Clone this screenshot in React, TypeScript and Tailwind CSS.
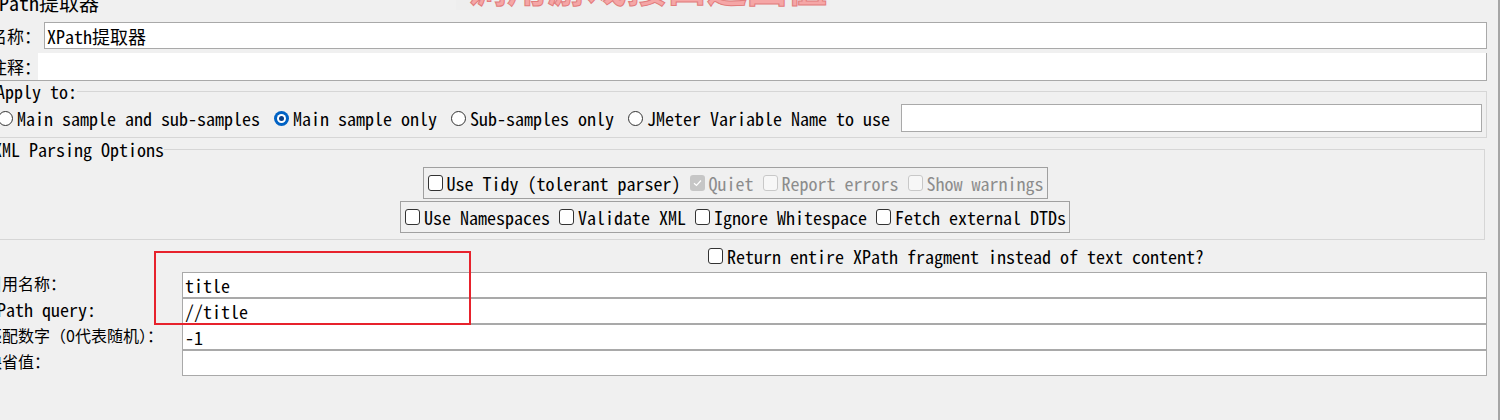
import React from "react";

type CbState = "off" | "dis" | "dischk";

function Check({ state = "off" }: { state?: CbState }) {
  if (state === "dischk") {
    return (
      <span className="w-[15px] h-[16px] shrink-0 rounded-[3px] bg-[#c6c6c6] flex items-center justify-center">
        <svg width="9" height="8" viewBox="0 0 9 8">
          <path d="M1 4.2 L3.5 6.5 L8 1.5" stroke="#ffffff" strokeWidth="1.2" fill="none" />
        </svg>
      </span>
    );
  }
  if (state === "dis") {
    return <span className="w-[15px] h-[16px] shrink-0 rounded-[3px] border border-[#c8c8c8] bg-[#f7f7f7]" />;
  }
  return <span className="w-[15px] h-[16px] shrink-0 rounded-[3px] border border-[#333333] bg-white" />;
}

function Radio({ on = false }: { on?: boolean }) {
  if (on) {
    return (
      <span className="w-[15px] h-[15px] shrink-0 rounded-full bg-[#0062c4] flex items-center justify-center">
        <span className="w-[9px] h-[9px] rounded-full bg-white flex items-center justify-center">
          <span className="w-[5px] h-[5px] rounded-full bg-[#0a3f86]" />
        </span>
      </span>
    );
  }
  return <span className="w-[15px] h-[15px] shrink-0 rounded-full border border-[#333333] bg-white" />;
}

function CbItem({ label, state = "off" }: { label: string; state?: CbState }) {
  return (
    <div className="flex items-center gap-[4px]">
      <Check state={state} />
      <span className={state === "off" ? "whitespace-pre leading-none" : "whitespace-pre leading-none text-[#8c8c8c]"}>{label}</span>
    </div>
  );
}

function RadioItem({ label, on = false }: { label: string; on?: boolean }) {
  return (
    <div className="flex items-center gap-[4px]">
      <Radio on={on} />
      <span className="whitespace-pre leading-none">{label}</span>
    </div>
  );
}

const fields: { label: string; value: string; mono: boolean }[] = [
  { label: "引用名称：", value: "title", mono: false },
  { label: "XPath query:", value: "//title", mono: true },
  { label: "匹配数字（0代表随机）：", value: "-1", mono: false },
  { label: "缺省值：", value: "", mono: false },
];

export default function App() {
  return (
    <div className="relative w-[1500px] h-[420px] overflow-hidden bg-[#f0f0f0] text-black border-r-2 border-[#a6a6a6] font-['Noto_Sans_Mono_CJK_SC','Liberation_Mono',monospace] text-[18px]">
      <div className="-ml-[11px] pr-[11px] flex flex-col">
        {/* title */}
        <div className="h-[22px]">
          <div className="-mt-[7px] text-[20px] leading-[20px] whitespace-pre">XPath提取器</div>
        </div>

        {/* name */}
        <div className="flex h-[27px] items-center">
          <div className="w-[55px] shrink-0 pl-[1px] font-['Noto_Sans_CJK_SC',sans-serif] text-[17px] leading-none whitespace-nowrap">名称：</div>
          <div className="flex-1 h-full border border-[#a9a9a9] bg-white flex items-center pl-[2px] leading-none whitespace-pre">XPath提取器</div>
        </div>

        {/* comment */}
        <div className="mt-[4px] flex h-[28px] border-b border-[#a9a9a9]">
          <div className="w-[49px] shrink-0 pl-[1px] flex items-center font-['Noto_Sans_CJK_SC',sans-serif] text-[17px] leading-none whitespace-nowrap">注释：</div>
          <div className="flex-1 bg-white border-r border-[#a9a9a9]" />
        </div>

        {/* Apply to */}
        <fieldset className="mt-[1px] ml-[2px] border border-[#d6d6d6] pl-[6px] pr-[4px] pb-[5px]">
          <legend className="-ml-[2px] leading-[18px] whitespace-pre">Apply to:</legend>
          <div className="mt-[4px] h-[28px] flex items-center">
            <div className="flex items-center gap-[14px]">
              <RadioItem label="Main sample and sub-samples" />
              <RadioItem label="Main sample only" on />
              <RadioItem label="Sub-samples only" />
              <RadioItem label="JMeter Variable Name to use" />
            </div>
            <div className="ml-[11px] flex-1 h-full border border-[#a9a9a9] bg-white" />
          </div>
        </fieldset>

        {/* XML Parsing Options */}
        <fieldset className="mt-[2px] ml-[2px] mr-[2px] border border-[#d6d6d6] pr-[6px] pb-[6px]">
          <legend className="ml-[1px] leading-[18px] whitespace-pre">XML Parsing Options</legend>
          <div className="mt-[9px] flex flex-col items-center gap-[2px]">
            <div className="h-[32px] border border-[#a0a0a0] flex items-center pl-[4px] pr-[3px] gap-[9px]">
              <CbItem label="Use Tidy (tolerant parser)" />
              <CbItem label="Quiet" state="dischk" />
              <CbItem label="Report errors" state="dis" />
              <CbItem label="Show warnings" state="dis" />
            </div>
            <div className="h-[32px] border border-[#a0a0a0] flex items-center pl-[4px] pr-[3px] gap-[9px]">
              <CbItem label="Use Namespaces" />
              <CbItem label="Validate XML" />
              <CbItem label="Ignore Whitespace" />
              <CbItem label="Fetch external DTDs" />
            </div>
          </div>
        </fieldset>

        {/* return fragment */}
        <div className="h-[32px] flex items-center pl-[719px]">
          <CbItem label="Return entire XPath fragment instead of text content?" />
        </div>

        {/* fields */}
        <div className="flex flex-col">
          {fields.map((f) => (
            <div key={f.label} className="flex h-[26px]">
              <div
                className={
                  f.mono
                    ? "w-[193px] shrink-0 -ml-[3px] pl-[2px] pb-[4px] flex items-center leading-none whitespace-pre"
                    : "w-[193px] shrink-0 -ml-[3px] pb-[4px] flex items-center leading-none whitespace-pre font-['Noto_Sans_CJK_SC',sans-serif] text-[16px]"
                }
              >
                {f.label}
              </div>
              <div className="ml-[3px] flex-1 border border-[#a9a9a9] bg-white flex items-center pl-[2px] leading-none whitespace-pre">{f.value}</div>
            </div>
          ))}
        </div>
      </div>

      {/* red annotation rectangle */}
      <div className="absolute left-[154px] top-[251px] w-[317px] h-[74px] border-2 border-[#e7222c]" />

      {/* watermark, cut off at the top */}
      <div className="absolute left-[456px] top-0 w-[374px] h-[10px] overflow-hidden bg-[#eeeeee]">
        <div className="absolute left-[3px] top-[-38px] whitespace-nowrap font-['Noto_Sans_CJK_SC',sans-serif] font-bold text-[40px] leading-[40px] text-[#f5a6a6] [-webkit-text-stroke:1px_#e27c7c]">
          <span className="inline-block w-[8px] overflow-hidden">·</span>调用游戏接口返回值
        </div>
      </div>
    </div>
  );
}
